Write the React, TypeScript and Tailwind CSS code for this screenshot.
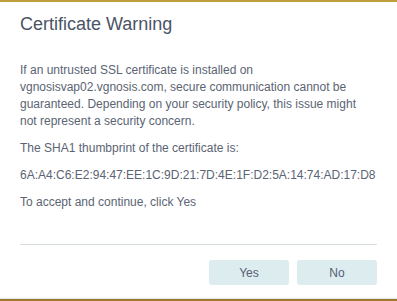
import React from "react";

export default function App() {
  return (
    <div
      className="w-[397px] h-[301px] bg-white flex flex-col border-t-2 border-[#c29e3c]"
      style={{ fontFamily: '"Liberation Sans", Arial, sans-serif' }}
    >
      <div className="flex-1 flex flex-col px-5">
        <h1 className="mt-[10px] text-[18px] leading-[24px] text-[#4a5466]">Certificate Warning</h1>
        <div className="mt-[26px] text-[12px] leading-[17px] text-[#5b6473] flex flex-col gap-[10px]">
          <p className="pr-[8px]">
            If an untrusted SSL certificate is installed on vgnosisvap02.vgnosis.com, secure communication cannot be
            guaranteed. Depending on your security policy, this issue might not represent a security concern.
          </p>
          <p>The SHA1 thumbprint of the certificate is:</p>
          <p>6A:A4:C6:E2:94:47:EE:1C:9D:21:7D:4E:1F:D2:5A:14:74:AD:17:D8</p>
          <p>To accept and continue, click Yes</p>
        </div>
        <div className="mt-[33px] h-px bg-[#d6dee0]" />
        <div className="mt-[15px] flex justify-end gap-2">
          <button className="w-[80px] h-[25px] rounded-[3px] bg-[#ddecee] text-[12px] text-[#566075]">Yes</button>
          <button className="w-[80px] h-[25px] rounded-[3px] bg-[#ddecee] text-[12px] text-[#566075]">No</button>
        </div>
      </div>
      <div className="h-px bg-[#e4e4e4]" />
      <div className="h-[2px] bg-[#9c7c2e]" />
    </div>
  );
}
